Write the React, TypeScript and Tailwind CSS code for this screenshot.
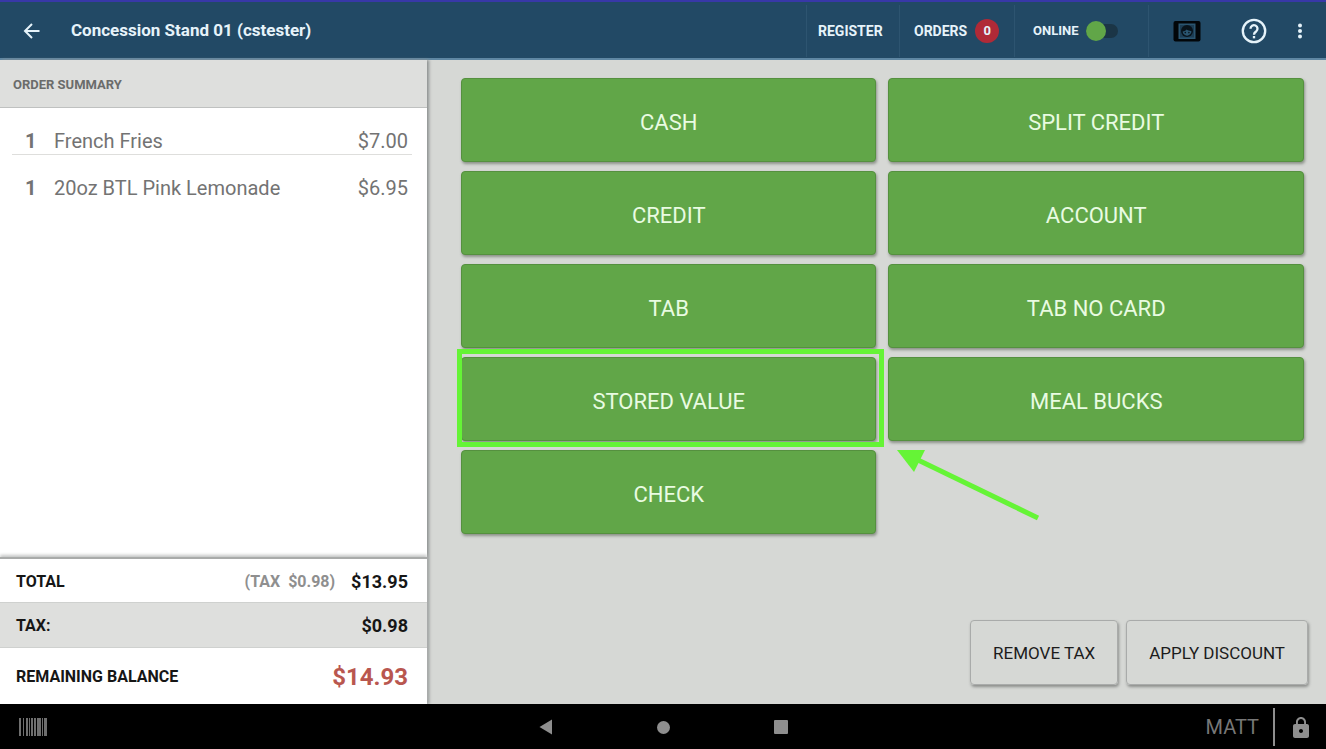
import { ReactNode } from 'react';

const items = [
  { qty: 1, name: 'French Fries', price: '$7.00' },
  { qty: 1, name: '20oz BTL Pink Lemonade', price: '$6.95' },
];

const tenders = [
  'CASH',
  'SPLIT CREDIT',
  'CREDIT',
  'ACCOUNT',
  'TAB',
  'TAB NO CARD',
  'STORED VALUE',
  'MEAL BUCKS',
  'CHECK',
];

function Header() {
  return (
    <header className="flex h-15 shrink-0 items-center border-t-2 border-b-2 border-t-[#3838a8] border-b-[#5f87a3] bg-[#224965] pt-[2px] text-[#e6f3fa]">
      <button type="button" aria-label="Back" className="ml-5 flex size-6 items-center justify-center">
        <svg viewBox="0 0 24 24" className="size-6 fill-none stroke-current stroke-2">
          <path d="M19.5 12H6M12 5L5 12L12 19" />
        </svg>
      </button>
      <h1 className="ml-[27px] text-[17px] font-bold">Concession Stand 01 (cstester)</h1>

      <nav className="ml-auto flex h-13 items-stretch text-sm font-bold">
        <a href="#register" className="flex w-[93px] items-center border-l border-[#2d5470] pl-[11px]">
          REGISTER
        </a>
        <a href="#orders" className="flex w-[115px] items-center gap-2 border-l border-[#2d5470] pl-[14px]">
          ORDERS
          <span className="flex size-6 items-center justify-center rounded-full bg-[#b02a37] text-[13px]">0</span>
        </a>
        <label className="flex w-[134px] items-center gap-2 border-l border-[#2d5470] pl-[18px] text-[13px]">
          ONLINE
          <input type="checkbox" role="switch" defaultChecked className="peer sr-only" />
          <span className="flex h-[14px] w-8 items-center rounded-full bg-[#1b3546]">
            <span className="size-5 shrink-0 rounded-full bg-[#61a648]" />
          </span>
        </label>
      </nav>

      <div className="flex h-13 items-center border-l border-[#2d5470]">
        <button type="button" aria-label="Customer display" className="ml-6 flex">
          <svg viewBox="0 0 28 22" className="h-[22px] w-7">
            <rect x="0.5" y="1" width="27" height="20.5" rx="2" fill="#020609" />
            <rect x="5.5" y="3.5" width="17" height="15.5" fill="#2a5570" />
            <rect x="7" y="5" width="14" height="12.5" fill="#1c3d54" />
            <circle cx="14" cy="11" r="6" fill="#08131b" />
            <path d="M9.6 11.6c2.200-.3 3.200-1 3.900-2 1.300 1 2.900 1.400 4.900 1.300a4.400 4.400 0 1 1-8.800.7z" fill="#2a5570" />
            <circle cx="12.3" cy="12.6" r="0.8" fill="#08131b" />
            <circle cx="15.9" cy="12.6" r="0.8" fill="#08131b" />
          </svg>
        </button>
        <button type="button" aria-label="Help" className="ml-[39px] flex">
          <svg viewBox="0 0 24 24" className="size-7 fill-none stroke-current stroke-2">
            <circle cx="12" cy="12" r="9.6" />
            <path d="M9 10a3 3 0 1 1 4.9 2.3c-1.1.9-1.9 1.300-1.9 2.900" />
            <path d="M12 16.3v2" />
          </svg>
        </button>
        <button type="button" aria-label="More options" className="mr-4 ml-[22px] flex">
          <svg viewBox="0 0 20 24" className="h-6 w-5 fill-current">
            <circle cx="10" cy="6.5" r="2" />
            <circle cx="10" cy="12" r="2" />
            <circle cx="10" cy="17.5" r="2" />
          </svg>
        </button>
      </div>
    </header>
  );
}

function TotalRow({ label, className, children }: { label: string; className: string; children: ReactNode }) {
  return (
    <div className={`flex items-center justify-between pt-[2px] pr-[19px] pl-4 ${className}`}>
      <dt className="text-base font-bold">{label}</dt>
      <dd className="flex items-center gap-4 text-lg font-bold">{children}</dd>
    </div>
  );
}

function OrderSummary() {
  return (
    <aside className="relative z-10 flex w-[32.2%] shrink-0 flex-col bg-white shadow-[2px_0_3px_#8c9090]">
      <h2 className="flex h-12 items-center border-b border-[#bfc1c0] bg-[#dedfdd] pt-[2px] pl-[13px] text-[13px] font-bold text-[#6b6c6b]">
        ORDER SUMMARY
      </h2>

      <ul className="flex-1 pr-[15px] pl-3 text-xl leading-[26px] text-[#737373]">
        {items.map((item) => (
          <li
            key={item.name}
            className="flex h-[47px] items-end border-b border-[#dededc] pr-1 pl-[13px] last:border-transparent"
          >
            <span className="w-[29px] font-bold">{item.qty}</span>
            <span>{item.name}</span>
            <span className="ml-auto">{item.price}</span>
          </li>
        ))}
      </ul>

      <dl className="border-t-2 border-[#a9abaa] text-[#161616] shadow-[0_-2px_3px_#c4c6c5]">
        <TotalRow label="TOTAL" className="h-[43px]">
          <span className="text-base font-bold whitespace-pre text-[#8f8f8f]">{'(TAX  $0.98)'}</span>
          $13.95
        </TotalRow>
        <TotalRow label="TAX:" className="h-[46px] border-y border-[#cfd1cf] bg-[#dedfdd]">
          $0.98
        </TotalRow>
        <TotalRow label="REMAINING BALANCE" className="h-14">
          <span className="text-2xl text-[#b9574f]">$14.93</span>
        </TotalRow>
      </dl>
    </aside>
  );
}

/* Callout box and arrow laid over the tender that should be tapped */
function Callout() {
  return (
    <>
      <span className="pointer-events-none absolute -top-2 -right-2 -bottom-[6px] -left-1 z-10 border-[5px] border-[#65f436]" />
      <svg
        viewBox="0 0 144 72"
        className="pointer-events-none absolute top-full left-full z-10 mt-[9px] ml-[21px] h-[72px] w-36"
      >
        <path d="M20 9.5L141 68" fill="none" stroke="#65f436" strokeWidth="5" />
        <path d="M0 0H28L17 22Z" fill="#65f436" />
      </svg>
    </>
  );
}

function Payment() {
  return (
    <main className="flex flex-1 flex-col bg-[#d6d8d5] pt-[18px] pr-[18px] pb-[19px] pl-[34px]">
      <div className="mr-1 grid grid-cols-2 gap-x-3 gap-y-[9px]">
        {tenders.map((name) => (
          <div key={name} className="relative h-[84px]">
            <button
              type="button"
              className="h-full w-full rounded border border-[#55903f] bg-[#61a648] pt-1 text-[22px] text-[#e9fbe2] shadow-[1px_2px_3px_#8b9188]"
            >
              {name}
            </button>
            {name === 'STORED VALUE' && <Callout />}
          </div>
        ))}
      </div>

      <div className="mt-auto flex justify-end gap-2">
        <button
          type="button"
          className="h-[65px] rounded border border-[#a9abaa] px-[22px] pt-[2px] text-[17px] text-[#1c1c1c] shadow-[1px_2px_3px_#8c8e8c]"
        >
          REMOVE TAX
        </button>
        <button
          type="button"
          className="h-[65px] rounded border border-[#a9abaa] px-[22px] pt-[2px] text-[17px] text-[#1c1c1c] shadow-[1px_2px_3px_#8c8e8c]"
        >
          APPLY DISCOUNT
        </button>
      </div>
    </main>
  );
}

function SystemBar() {
  return (
    <footer className="z-20 grid h-[45px] shrink-0 grid-cols-[1fr_auto_1fr] items-center bg-black pt-[1px] text-[#8e8e8e]">
      <svg viewBox="0 0 28 18" className="ml-[19px] h-[18px] w-7 fill-[#6f6f6f]">
        <path d="M0 0h2v18H0zM4 0h1v18H4zM7 0h2v18H7zM10 0h1v18h-1zM12 0h2v18h-2zM15 0h2v18h-2zM18 0h4v18h-4zM23 0h1v18h-1zM25 0h3v18h-3z" />
      </svg>
      <div className="flex items-center gap-[104px]">
        <button type="button" aria-label="Back">
          <svg viewBox="0 0 14 16" className="h-4 w-[14px] fill-current">
            <path d="M0.5 8L13 0.5V15.5Z" />
          </svg>
        </button>
        <button type="button" aria-label="Home" className="size-[13px] rounded-full bg-current" />
        <button type="button" aria-label="Recents" className="size-[14px] rounded-[1px] bg-current" />
      </div>
      <div className="flex items-center justify-end">
        <span className="text-xl text-[#777777]">MATT</span>
        <span className="ml-[14px] h-[38px] w-[2px] bg-[#8e8e8e]" />
        <button type="button" aria-label="Lock" className="mr-[17px] ml-[18px]">
          <svg viewBox="4 1 16 21" className="h-[21px] w-4 fill-current">
            <path d="M18 8h-1V6c0-2.76-2.24-5-5-5S7 3.24 7 6v2H6c-1.1 0-2 .9-2 2v10c0 1.1.9 2 2 2h12c1.1 0 2-.9 2-2V10c0-1.1-.9-2-2-2zm-6 9c-1.1 0-2-.9-2-2s.9-2 2-2 2 .9 2 2-.9 2-2 2zm3.1-9H8.9V6c0-1.71 1.39-3.1 3.1-3.1s3.1 1.39 3.1 3.1v2z" />
          </svg>
        </button>
      </div>
    </footer>
  );
}

export default function App() {
  return (
    <div className="flex min-h-screen flex-col font-[Roboto,sans-serif]">
      <Header />
      <div className="flex flex-1">
        <OrderSummary />
        <Payment />
      </div>
      <SystemBar />
    </div>
  );
}
